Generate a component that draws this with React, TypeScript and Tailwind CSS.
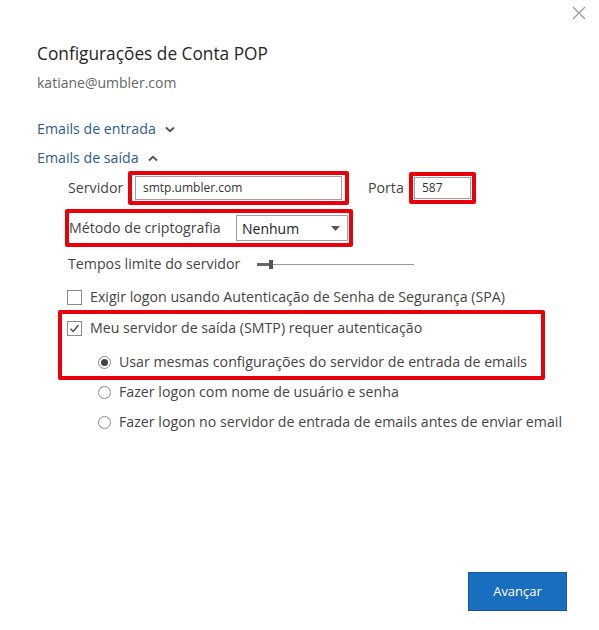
import React from "react";

function Checkbox({ checked }: { checked?: boolean }) {
  return (
    <span className="w-[15px] h-[15px] border border-[#8a8a8a] bg-white flex items-center justify-center shrink-0">
      {checked && (
        <svg width="11" height="11" viewBox="0 0 11 11" fill="none">
          <path d="M1.5 5.8 L4.2 8.5 L9.5 2" stroke="#444" strokeWidth="1.3" />
        </svg>
      )}
    </span>
  );
}

function Radio({ checked }: { checked?: boolean }) {
  return (
    <span className="w-[13px] h-[13px] rounded-full border border-[#8a8a8a] bg-white flex items-center justify-center shrink-0">
      {checked && <span className="w-[7px] h-[7px] rounded-full bg-[#444]" />}
    </span>
  );
}

function Chevron({ up }: { up?: boolean }) {
  return (
    <svg width="10" height="7" viewBox="0 0 10 7" className="ml-[9px]">
      <path d={up ? "M1 5.5 L5 1.8 L9 5.5" : "M1 1.5 L5 5.2 L9 1.5"} stroke="#555" strokeWidth="2" fill="none" />
    </svg>
  );
}

export default function App() {
  return (
    <div className="w-[599px] h-[630px] bg-white relative flex flex-col font-['Open_Sans',sans-serif] text-[#444]">
      <svg width="14" height="14" viewBox="0 0 14 14" className="absolute left-[572px] top-[6px]">
        <path d="M1 1 L13 13 M13 1 L1 13" stroke="#999" strokeWidth="1.2" />
      </svg>

      <div className="pl-[37px] pt-[40px] flex flex-col">
        <div className="h-[28px] flex items-center text-[17.3px] text-[#262626]">Configurações de Conta POP</div>
        <div className="h-[24px] mt-[2px] flex items-center text-[14px] text-[#666]">katiane@umbler.com</div>

        <div className="h-[24px] mt-[23px] flex items-center text-[14.2px] text-[#2f5b8c]">
          Emails de entrada
          <Chevron />
        </div>
        <div className="h-[24px] mt-[5px] flex items-center text-[14.2px] text-[#2f5b8c]">
          Emails de saída
          <Chevron up />
        </div>

        <div className="h-[34px] mt-[1px] flex items-center text-[14.2px]">
          <span className="ml-[31px] w-[60px]">Servidor</span>
          <div className="border-[4px] border-[#e8000b] rounded-[2px] px-[3px] py-[1px]">
            <div className="w-[207px] h-[24px] border border-[#a0a0a0] flex items-center pl-[7px] text-[12px] text-[#333]">
              smtp.umbler.com
            </div>
          </div>
          <span className="ml-[19px] w-[41px]">Porta</span>
          <div className="border-[4px] border-[#e8000b] rounded-[2px] px-[1px] py-[1px]">
            <div className="w-[57px] h-[22px] border border-[#a0a0a0] flex items-center pl-[7px] text-[12px] text-[#333]">
              587
            </div>
          </div>
        </div>

        <div className="h-[38px] mt-[4px] ml-[28px] w-[288px] border-[4px] border-[#e8000b] rounded-[2px] flex items-center text-[14.2px]">
          <span className="w-[167px]">Método de criptografia</span>
          <div className="w-[112px] h-[26px] border border-[#a0a0a0] flex items-center justify-between pl-[5px] pr-[7px] text-[14px] text-[#222]">
            Nenhum
            <svg width="9" height="5" viewBox="0 0 9 5">
              <path d="M0 0 L9 0 L4.5 5 Z" fill="#555" />
            </svg>
          </div>
        </div>

        <div className="h-[24px] mt-[5px] ml-[31px] flex items-center text-[14.2px]">
          <span className="w-[189px]">Tempos limite do servidor</span>
          <div className="flex items-center">
            <div className="w-[12px] h-[3px] bg-[#666]" />
            <div className="w-[4px] h-[9px] bg-[#555]" />
            <div className="w-[141px] h-[1px] bg-[#999]" />
          </div>
        </div>

        <div className="h-[24px] mt-[9px] ml-[30px] flex items-center gap-[8px] text-[14.2px]">
          <Checkbox />
          <span>Exigir logon usando Autenticação de Senha de Segurança (SPA)</span>
        </div>

        <div className="mt-[1px] ml-[21px] w-[487px] border-[4px] border-[#e8000b] rounded-[2px] pt-[2px] pb-[2px] text-[14.2px]">
          <div className="h-[24px] ml-[5px] flex items-center gap-[8px]">
            <Checkbox checked />
            <span>Meu servidor de saída (SMTP) requer autenticação</span>
          </div>
          <div className="h-[24px] mt-[10px] ml-[36px] flex items-center gap-[8px]">
            <Radio checked />
            <span>Usar mesmas configurações do servidor de entrada de emails</span>
          </div>
        </div>

        <div className="h-[24px] ml-[61px] flex items-center gap-[8px] text-[14.2px]">
          <Radio />
          <span>Fazer logon com nome de usuário e senha</span>
        </div>
        <div className="h-[24px] mt-[6px] ml-[61px] flex items-center gap-[8px] text-[14.2px]">
          <Radio />
          <span>Fazer logon no servidor de entrada de emails antes de enviar email</span>
        </div>
      </div>

      <div className="mt-auto flex justify-end pr-[32px] pb-[19px]">
        <button className="w-[99px] h-[39px] bg-[#1a6ec0] border border-[#15599c] text-white text-[13px]">Avançar</button>
      </div>
    </div>
  );
}
